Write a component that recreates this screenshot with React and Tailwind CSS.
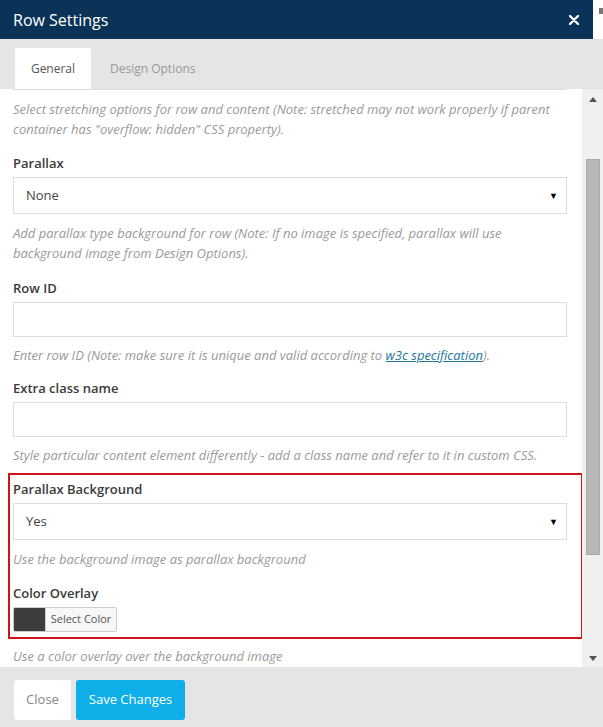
import React from "react";

const font = { fontFamily: '"Open Sans", "Noto Sans", sans-serif' };

const Help = ({ children, className = "" }) => (
  <p className={`w-[554px] text-[13px] leading-[20px] italic text-[#9a9a9a] ${className}`}>{children}</p>
);

const Label = ({ children, className = "" }) => (
  <div className={`text-[13px] leading-[20px] font-semibold text-[#3a3a3a] ${className}`}>{children}</div>
);

const Select = ({ value, className = "" }) => (
  <div
    className={`flex items-center justify-between h-[37px] w-[554px] border border-[#ddd] bg-white pl-[12px] pr-[8px] text-[13px] text-[#444] ${className}`}
  >
    <span>{value}</span>
    <span className="text-[9px] text-black">▼</span>
  </div>
);

const TextInput = ({ className = "" }) => (
  <div className={`h-[35px] w-[554px] border border-[#ddd] bg-white ${className}`} />
);

export default function App() {
  return (
    <div className="w-[603px] h-[727px] bg-white flex flex-col overflow-hidden" style={font}>
      {/* header */}
      <div className="flex h-[39px]">
        <div className="flex-1 bg-[#0b3358] flex items-center justify-between pl-[13px] pr-[14px]">
          <span className="text-[16px] text-white">Row Settings</span>
          <svg width="10" height="10" viewBox="0 0 10 10">
            <path d="M1 1L9 9M9 1L1 9" stroke="#fff" strokeWidth="2.4" strokeLinecap="round" />
          </svg>
        </div>
        <div className="w-[10px] bg-white pt-[8px] flex justify-end">
          <div className="w-[4px] h-[6px] bg-[#777]" />
        </div>
      </div>

      {/* tabs */}
      <div className="h-[50px] bg-[#e5e5e5] flex items-end pl-[15px]">
        <div className="h-[41px] w-[76px] bg-white rounded-t-[3px] flex items-center justify-center text-[12px] text-[#555]">
          General
        </div>
        <div className="h-[41px] pl-[19px] flex items-center text-[12px] text-[#999]">Design Options</div>
      </div>

      {/* scrolling body */}
      <div className="flex h-[578px]">
        <div className="w-[582px] pl-[13px] overflow-hidden">
          <div className="h-px w-[554px] bg-[#ddd]" />
          <Help className="mt-[9px]">
            Select stretching options for row and content (Note: stretched may not work properly if parent
            container has "overflow: hidden" CSS property).
          </Help>

          <Label className="mt-[14px]">Parallax</Label>
          <Select value="None" className="mt-[4px]" />
          <Help className="mt-[9px]">
            Add parallax type background for row (Note: If no image is specified, parallax will use
            background image from Design Options).
          </Help>

          <Label className="mt-[15px]">Row ID</Label>
          <TextInput className="mt-[4px]" />
          <Help className="mt-[8px]">
            Enter row ID (Note: make sure it is unique and valid according to{" "}
            <a className="text-[#21759b] underline">w3c specification</a>).
          </Help>

          <Label className="mt-[13px]">Extra class name</Label>
          <TextInput className="mt-[4px]" />
          <Help className="mt-[8px]">
            Style particular content element differently - add a class name and refer to it in custom CSS.
          </Help>

          {/* highlighted group */}
          <div className="mt-[8px] -ml-[5px] w-[575px] border-2 border-[#d0121b] pl-[3px] pt-[4px] pb-[5px]">
            <Label>Parallax Background</Label>
            <Select value="Yes" className="mt-[4px]" />
            <Help className="mt-[9px]">Use the background image as parallax background</Help>
            <Label className="mt-[14px]">Color Overlay</Label>
            <div className="mt-[4px] flex h-[25px] w-[104px] rounded-[2px] border border-[#ccc] overflow-hidden">
              <div className="w-[31px] bg-[#3d3d3d]" />
              <div className="flex-1 bg-[#f7f7f7] flex items-center justify-center text-[11px] text-[#555] border-l border-[#ccc]">
                Select Color
              </div>
            </div>
          </div>
          <Help className="mt-[7px]">Use a color overlay over the background image</Help>
        </div>

        {/* scrollbar */}
        <div className="flex-1 bg-[#f0f0f0] flex flex-col items-center">
          <div className="h-[20px] flex items-center">
            <svg width="8" height="5" viewBox="0 0 8 5">
              <path d="M4 0L8 5H0Z" fill="#555" />
            </svg>
          </div>
          <div className="mt-[50px] w-[14px] h-[396px] bg-[#b8b8b8] border border-[#a9a9a9]" />
          <div className="flex-1" />
          <div className="h-[18px] flex items-center">
            <svg width="8" height="5" viewBox="0 0 8 5">
              <path d="M0 0H8L4 5Z" fill="#555" />
            </svg>
          </div>
        </div>
      </div>

      {/* footer */}
      <div className="flex-1 bg-[#e5e5e5] flex items-start gap-[5px] pl-[14px] pt-[13px]">
        <button className="h-[40px] w-[57px] bg-white rounded-[3px] text-[13px] text-[#888]">Close</button>
        <button className="h-[40px] w-[109px] bg-[#0eaee9] rounded-[3px] text-[13px] text-white">Save Changes</button>
      </div>
    </div>
  );
}
